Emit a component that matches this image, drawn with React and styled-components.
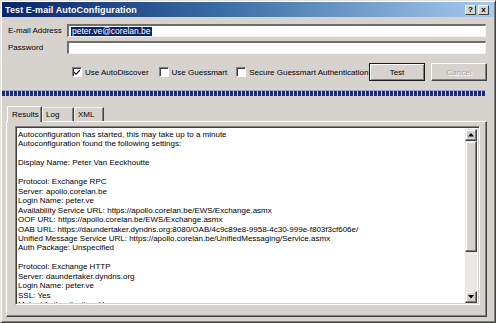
import React from "react";
import styled, { createGlobalStyle } from "styled-components";

const Global = createGlobalStyle`
  html, body { margin: 0; padding: 0; background: #d4d0c8; }
  body { font-family: "Liberation Sans", Arial, sans-serif; }
  * { box-sizing: border-box; }
`;

const Window = styled.div`
  width: 496px;
  height: 323px;
  background: #d6d3ce;
  border: 1px solid;
  border-color: #e4e2dc #404040 #404040 #e4e2dc;
  box-shadow: inset 1px 1px #ffffff, inset -1px -1px #808080;
  padding: 1px;
  display: flex;
  flex-direction: column;
  overflow: hidden;
  font-size: 8px;
  color: #000;
`;

const TitleBar = styled.div`
  height: 15px;
  flex: none;
  background: linear-gradient(to right, #0a246a 0%, #3a6ea5 45%, #a6caf0 100%);
  display: flex;
  align-items: center;
  justify-content: space-between;
  padding: 0 5px 0 3px;
`;

const Title = styled.span`
  color: #fff;
  font-weight: bold;
  font-size: 9px;
  letter-spacing: 0.1px;
`;

const TitleButtons = styled.div`
  display: flex;
  gap: 2px;
`;

const TitleButton = styled.div`
  width: 11px;
  height: 10px;
  background: #d6d3ce;
  border: 1px solid;
  border-color: #fff #404040 #404040 #fff;
  font-size: 8px;
  font-weight: bold;
  line-height: 8px;
  text-align: center;
  color: #000;
`;

const FieldRow = styled.div`
  flex: none;
  display: flex;
  align-items: center;
  height: 13px;
  margin-top: ${(p) => p.$top}px;
  padding: 0 8px 0 6px;
`;

const Label = styled.div`
  width: 59px;
  flex: none;
  font-size: 8px;
`;

const Input = styled.div`
  flex: 1;
  height: 13px;
  background: #fff;
  border-top: 2px solid #6f6d69;
  border-left: 2px solid #6f6d69;
  border-right: 1px solid #f4f3f0;
  border-bottom: 1px solid #f4f3f0;
  display: flex;
  align-items: center;
  padding-left: 2px;
`;

const Selected = styled.span`
  background: #0a246a;
  color: #fff;
  font-size: 8.5px;
  line-height: 9px;
  padding: 0 1px;
`;

const OptionsRow = styled.div`
  flex: none;
  display: flex;
  align-items: center;
  height: 18px;
  margin-top: 9px;
  padding: 0 7px 0 70px;
`;

const Check = styled.label`
  display: flex;
  align-items: center;
  gap: 3px;
  margin-right: ${(p) => p.$gap}px;
  font-size: 8px;
`;

const Box = styled.span`
  width: 10px;
  height: 10px;
  flex: none;
  background: #fff;
  border-top: 1px solid #808080;
  border-left: 1px solid #808080;
  border-right: 1px solid #fff;
  border-bottom: 1px solid #fff;
  box-shadow: inset 1px 1px #404040;
  display: flex;
  align-items: center;
  justify-content: center;
`;

const Spacer = styled.div`
  flex: 1;
`;

const Button = styled.div`
  width: 56px;
  height: 18px;
  margin-left: ${(p) => p.$ml || 0}px;
  display: flex;
  align-items: center;
  justify-content: center;
  font-size: 8px;
  background: #d6d3ce;
  color: ${(p) => (p.$disabled ? "#a9a7a2" : "#000")};
  text-shadow: ${(p) => (p.$disabled ? "1px 1px #fff" : "none")};
  border: 1px solid ${(p) => (p.$default ? "#1a1a1a" : "#fff")};
  border-right-color: ${(p) => (p.$default ? "#1a1a1a" : "#404040")};
  border-bottom-color: ${(p) => (p.$default ? "#1a1a1a" : "#404040")};
  box-shadow: ${(p) =>
    p.$default
      ? "inset 1px 1px #fff, inset -1px -1px #808080"
      : "inset -1px -1px #808080"};
`;

const Progress = styled.div`
  flex: none;
  height: 6px;
  margin: 9px 9px 0 0;
  background: repeating-linear-gradient(
    to right,
    #1c2a78 0px,
    #1c2a78 3px,
    #c8d0e8 3px,
    #c8d0e8 4px
  );
  border-top: 1px solid #9da6c8;
`;

const TabStrip = styled.div`
  flex: none;
  display: flex;
  align-items: flex-end;
  height: 16px;
  margin-top: 9px;
  padding-left: 5px;
`;

const Tab = styled.div`
  height: ${(p) => (p.$active ? 16 : 14)}px;
  width: ${(p) => p.$w}px;
  padding-left: ${(p) => (p.$active ? 4 : 3)}px;
  display: flex;
  align-items: center;
  font-size: 8px;
  background: #d6d3ce;
  border-left: 1px solid ${(p) => (p.$active ? "#fff" : "#f2f1ee")};
  border-top: 1px solid ${(p) => (p.$active ? "#fff" : "#f2f1ee")};
  border-right: 1px solid #404040;
  box-shadow: inset -1px 0 #808080;
  position: relative;
  z-index: ${(p) => (p.$active ? 2 : 1)};
  margin-bottom: ${(p) => (p.$active ? -1 : 0)}px;
`;

const Panel = styled.div`
  flex: 1;
  min-height: 0;
  margin: 0 7px 4px 4px;
  border: 1px solid;
  border-color: #fff #404040 #404040 #fff;
  box-shadow: inset -1px -1px #808080;
  padding: 4px 6px 11px 8px;
  display: flex;
`;

const TextBox = styled.div`
  flex: 1;
  min-height: 0;
  display: flex;
  background: #fff;
  border-top: 1px solid #808080;
  border-left: 1px solid #808080;
  border-right: 1px solid #fff;
  border-bottom: 1px solid #fff;
  box-shadow: inset 1px 1px #404040, inset -1px -1px #d6d3ce;
  padding: 2px 2px 1px 2px;
  overflow: hidden;
`;

const Text = styled.pre`
  flex: 1;
  margin: 0;
  padding: 1px 0 0 0;
  font-family: "Liberation Sans", Arial, sans-serif;
  font-size: 8px;
  line-height: 9.45px;
  white-space: pre;
  overflow: hidden;
`;

const Scrollbar = styled.div`
  width: 12px;
  flex: none;
  display: flex;
  flex-direction: column;
`;

const ScrollButton = styled.div`
  height: 12px;
  flex: none;
  background: #d6d3ce;
  border: 1px solid;
  border-color: #e8e6e2 #404040 #404040 #e8e6e2;
  box-shadow: inset -1px -1px #808080, inset 1px 1px #fff;
  display: flex;
  align-items: center;
  justify-content: center;
`;

const Thumb = styled.div`
  height: 111px;
  flex: none;
  background: #d6d3ce;
  border: 1px solid;
  border-color: #e8e6e2 #404040 #404040 #e8e6e2;
  box-shadow: inset -1px -1px #808080, inset 1px 1px #fff;
`;

const Track = styled.div`
  flex: 1;
  background: #ebe9e5;
`;

const Arrow = ({ down }) => (
  <svg width="6" height="4" viewBox="0 0 6 4">
    <polygon
      points={down ? "0,0 6,0 3,3.5" : "3,0 6,3.5 0,3.5"}
      fill="#000"
    />
  </svg>
);

const CheckMark = () => (
  <svg width="8" height="8" viewBox="0 0 8 8">
    <path d="M1 3.5 L3 5.5 L7 1.5 L7 3 L3 7 L1 5 Z" fill="#000" />
  </svg>
);

const RESULTS = `Autoconfiguration has started, this may take up to a minute
Autoconfiguration found the following settings:

Display Name: Peter Van Eeckhoutte

Protocol: Exchange RPC
Server: apollo.corelan.be
Login Name: peter.ve
Availability Service URL: https://apollo.corelan.be/EWS/Exchange.asmx
OOF URL: https://apollo.corelan.be/EWS/Exchange.asmx
OAB URL: https://daundertaker.dyndns.org:8080/OAB/4c9c89e8-9958-4c30-999e-f803f3cf606e/
Unified Message Service URL: https://apollo.corelan.be/UnifiedMessaging/Service.asmx
Auth Package: Unspecified

Protocol: Exchange HTTP
Server: daundertaker.dyndns.org
Login Name: peter.ve
SSL: Yes
Mutual Authentication: Yes`;

export default function App() {
  return (
    <>
      <Global />
      <Window>
        <TitleBar>
          <Title>Test E-mail AutoConfiguration</Title>
          <TitleButtons>
            <TitleButton>?</TitleButton>
            <TitleButton>x</TitleButton>
          </TitleButtons>
        </TitleBar>

        <FieldRow $top={7}>
          <Label>E-mail Address</Label>
          <Input>
            <Selected>peter.ve@corelan.be</Selected>
          </Input>
        </FieldRow>
        <FieldRow $top={4}>
          <Label>Password</Label>
          <Input />
        </FieldRow>

        <OptionsRow>
          <Check $gap={10}>
            <Box>
              <CheckMark />
            </Box>
            Use AutoDiscover
          </Check>
          <Check $gap={9}>
            <Box />
            Use Guessmart
          </Check>
          <Check $gap={0}>
            <Box />
            Secure Guessmart Authentication
          </Check>
          <Spacer />
          <Button $default>Test</Button>
          <Button $ml={6} $disabled>
            Cancel
          </Button>
        </OptionsRow>

        <Progress />

        <TabStrip>
          <Tab $active $w={35}>Results</Tab>
          <Tab $w={32}>Log</Tab>
          <Tab $w={30}>XML</Tab>
        </TabStrip>

        <Panel>
          <TextBox>
            <Text>{RESULTS}</Text>
            <Scrollbar>
              <ScrollButton>
                <Arrow />
              </ScrollButton>
              <Thumb />
              <Track />
              <ScrollButton>
                <Arrow down />
              </ScrollButton>
            </Scrollbar>
          </TextBox>
        </Panel>
      </Window>
    </>
  );
}
